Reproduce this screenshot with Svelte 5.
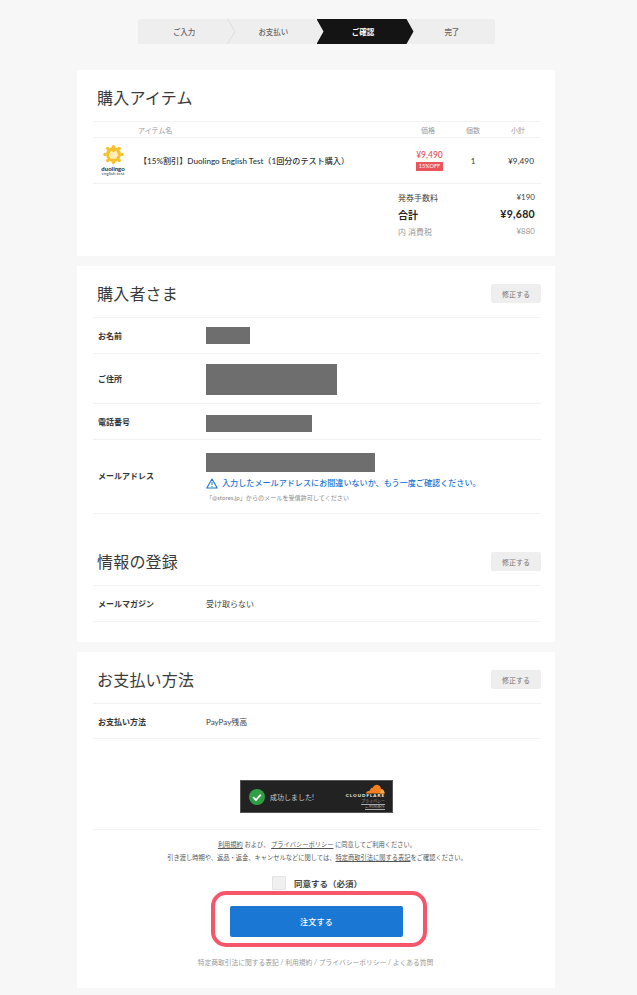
<script>
  const steps = [
    { label: 'ご入力' },
    { label: 'お支払い' },
    { label: 'ご確認', active: true },
    { label: '完了' }
  ];
  const buyer = [
    { label: 'お名前', w: 44, h: 17, cls: 'r1' },
    { label: 'ご住所', w: 131, h: 31, cls: 'r2' },
    { label: '電話番号', w: 106, h: 17, cls: 'r3' }
  ];
</script>

<div class="page">
  <ol class="stepper">
    {#each steps as s, i}
      <li class="step" class:active={s.active}>
        <span>{s.label}</span>
        {#if i === 0}
          <svg class="chev" width="9" height="25" viewBox="0 0 9 25"><path d="M0.5 0 L8 12.5 L0.5 25" fill="none" stroke="#dedede" stroke-width="1" /></svg>
        {/if}
      </li>
    {/each}
  </ol>

  <section class="card c1">
    <h2 class="title t1">購入アイテム</h2>
    <div class="thead">
      <span class="th-name">アイテム名</span>
      <span class="th-price">価格</span>
      <span class="th-qty">個数</span>
      <span class="th-sub">小計</span>
    </div>
    <div class="item">
      <div class="logo">
        <svg width="21" height="19" viewBox="0 0 22 20">
          <circle cx="11" cy="10" r="7.8" fill="#f6c02c" />
          <g fill="#f6c02c">
            <circle cx="11" cy="1.8" r="1.8" /><circle cx="17" cy="3.6" r="1.8" /><circle cx="20" cy="10" r="1.8" />
            <circle cx="17" cy="16.4" r="1.8" /><circle cx="11" cy="18.2" r="1.8" /><circle cx="5" cy="16.4" r="1.8" />
            <circle cx="2" cy="10" r="1.8" /><circle cx="5" cy="3.6" r="1.8" />
          </g>
          <path d="M6 10.5 L8.5 6 L11 7.5 L14 5.5 L16 10.5 L13.5 14.5 L8 14.5 Z" fill="#fdeeb8" />
        </svg>
        <span class="duo">duolingo</span>
        <span class="duo2">english test</span>
      </div>
      <div class="iname">【15%割引】Duolingo English Test（1回分のテスト購入）</div>
      <div class="iprice">
        <span class="red">¥9,490</span>
        <span class="off">15%OFF</span>
      </div>
      <div class="iqty">1</div>
      <div class="isub">¥9,490</div>
    </div>
    <div class="summary">
      <div class="sum-row fee"><span>発券手数料</span><span>¥190</span></div>
      <div class="sum-row total"><span>合計</span><span>¥9,680</span></div>
      <div class="sum-row tax"><span>内 消費税</span><span>¥880</span></div>
    </div>
  </section>

  <section class="card c2">
    <div class="head">
      <h2 class="title">購入者さま</h2>
      <button class="edit">修正する</button>
    </div>
    {#each buyer as b}
      <div class="row {b.cls}">
        <div class="label">{b.label}</div>
        <div class="mask" style="width:{b.w}px;height:{b.h}px"></div>
      </div>
    {/each}
    <div class="row r4">
      <div class="label">メールアドレス</div>
      <div class="mailbox">
        <div class="mask" style="width:169px;height:19px"></div>
        <p class="warn">
          <svg width="12" height="11" viewBox="0 0 12 11"><path d="M6 1 L11.2 10 L0.8 10 Z" fill="none" stroke="#1a78d4" stroke-width="1.1" stroke-linejoin="round" /><path d="M6 4 V7 M6 8 V9" stroke="#1a78d4" stroke-width="1" /></svg>
          <span>入力したメールアドレスにお間違いないか、もう一度ご確認ください。</span>
        </p>
        <p class="note">「@stores.jp」からのメールを受信許可してください</p>
      </div>
    </div>

    <div class="head h2">
      <h2 class="title">情報の登録</h2>
      <button class="edit">修正する</button>
    </div>
    <div class="row r5">
      <div class="label">メールマガジン</div>
      <div class="val">受け取らない</div>
    </div>
  </section>

  <section class="card c3">
    <div class="head">
      <h2 class="title">お支払い方法</h2>
      <button class="edit">修正する</button>
    </div>
    <div class="row r6">
      <div class="label">お支払い方法</div>
      <div class="val">PayPay残高</div>
    </div>

    <div class="turnstile">
      <svg class="ok" width="16" height="16" viewBox="0 0 16 16"><circle cx="8" cy="8" r="8" fill="#2f9e44" /><path d="M4.2 8.2 L7 11 L11.8 5.6" fill="none" stroke="#fff" stroke-width="1.8" /></svg>
      <span class="ok-text">成功しました!</span>
      <div class="cf">
        <svg width="20" height="10" viewBox="0 0 20 10"><path d="M1 9.5 C1 7.5 3 7 4.5 7 C5 4.5 7 3.5 8 3.5 C9 1 12 0 14 1.5 C15.5 2.5 16 4 16 5 C18 5 19.5 7 19.5 9.5 Z" fill="#f38020" /><path d="M15 9.5 C15.5 7 16 6 17 5.4 C18.7 5.8 19.5 7.5 19.5 9.5 Z" fill="#f9ab41" /></svg>
        <span class="cf-name">CLOUDFLARE</span>
        <span class="cf-link">プライバシー</span>
        <span class="cf-link">ご利用条件</span>
      </div>
    </div>

    <div class="terms">
      <p><u>利用規約</u> および、 <u>プライバシーポリシー</u> に同意してご利用ください。</p>
      <p>引き渡し時期や、返品・返金、キャンセルなどに関しては、<u>特定商取引法に関する表記</u>をご確認ください。</p>
    </div>

    <label class="agree"><span class="box"></span><span>同意する（必須）</span></label>

    <div class="ring"><button class="order">注文する</button></div>

    <p class="foot">特定商取引法に関する表記 / 利用規約 / プライバシーポリシー / よくある質問</p>
  </section>
</div>

<style>
  :global(body) {
    margin: 0;
    background: #f7f7f7;
  }
  .page {
    height: 995px;
    overflow: hidden;
    font-family: Lato, "Noto Sans CJK JP", sans-serif;
    color: #333;
    padding-top: 19px;
    box-sizing: border-box;
  }
  p, h2, ol { margin: 0; padding: 0; }
  .stepper {
    list-style: none;
    display: flex;
    width: 357px;
    height: 25px;
    margin: 0 0 26px 138px;
    background: #eeeeee;
    border-radius: 2px;
  }
  .step {
    flex: 0 0 89.25px;
    position: relative;
    display: flex;
    align-items: center;
    justify-content: center;
    box-sizing: border-box;
    padding-left: 3px;
    font-size: 7.5px;
    color: #666;
    font-weight: 500;
  }
  .step.active {
    background: #141414;
    color: #fff;
    font-weight: 700;
    flex: 0 0 97px;
    padding: 0 4px 0 0;
    margin-right: -7.75px;
    clip-path: polygon(0 0, 90px 0, 97px 50%, 90px 100%, 0 100%, 7px 50%);
    z-index: 1;
  }
  .chev { position: absolute; left: 88.5px; top: 0; }
  .card {
    width: 478px;
    margin: 0 0 10px 77px;
    background: #fff;
    box-sizing: border-box;
    padding: 0 14px 0 16px;
  }
  .c1 { height: 186px; }
  .c2 { height: 376px; }
  .c3 { height: 336px; }
  .title {
    font-size: 16px;
    font-weight: 400;
    color: #3a3a3a;
    line-height: 24px;
    letter-spacing: 0.2px;
  }
  .t1 { padding: 16px 0 11px 4px; }
  .thead {
    display: flex;
    align-items: center;
    height: 17px;
    border-top: 1px solid #f2f2f2;
    border-bottom: 1px solid #f2f2f2;
    font-size: 7px;
    color: #999;
    box-sizing: border-box;
  }
  .th-name { margin-left: 45px; width: 283px; }
  .th-price { width: 25px; }
  .th-qty { width: 45px; margin-left: 20px; }
  .item {
    display: flex;
    align-items: center;
    height: 46px;
    border-bottom: 1px solid #f2f2f2;
    box-sizing: border-box;
  }
  .logo {
    width: 26px;
    margin-left: 7px;
    display: flex;
    flex-direction: column;
    align-items: center;
    line-height: 1;
  }
  .duo { font-size: 6px; font-weight: 900; color: #2c3a55; margin-top: 2px; }
  .duo2 { font-size: 4.5px; color: #2c3a55; }
  .iname {
    width: 275px;
    margin-left: 13px;
    font-size: 8.1px;
    font-weight: 500;
    white-space: nowrap;
  }
  .iprice {
    width: 27px;
    display: flex;
    flex-direction: column;
    align-items: center;
    margin: 0 21px 0 2px;
  }
  .red { font-size: 8.5px; color: #e2525a; font-weight: 500; line-height: 11px; }
  .off {
    background: #e8555c;
    color: #fff;
    font-size: 5.5px;
    width: 27px;
    text-align: center;
    line-height: 9px;
    margin-top: 1px;
  }
  .iqty { width: 18px; font-size: 8px; text-align: center; }
  .isub { width: 52px; text-align: right; font-size: 8.3px; box-sizing: border-box; }
  .summary { margin: 6px 0 0 305px; padding-right: 6px; }
  .sum-row { display: flex; justify-content: space-between; align-items: center; }
  .fee { font-size: 8px; height: 14px; color: #444; }
  .total { font-size: 10px; font-weight: 700; height: 20px; color: #222; }
  .total span:last-child { font-size: 10.5px; letter-spacing: .3px; }
  .tax { font-size: 8px; height: 14px; color: #999; }
  .head {
    display: flex;
    justify-content: space-between;
    align-items: center;
    height: 52px;
    padding: 4px 0 0 4px;
    box-sizing: border-box;
    border-bottom: 1px solid #f2f2f2;
  }
  .h2 { margin-top: 22px; height: 50px; padding-top: 2px; }
  .edit {
    width: 50px;
    height: 19px;
    border: 0;
    border-radius: 2px;
    background: #eeeeee;
    color: #777;
    font: 400 7px Lato, "Noto Sans CJK JP", sans-serif;
    padding: 0;
  }
  .row {
    display: flex;
    align-items: center;
    padding-left: 5px;
    border-bottom: 1px solid #f2f2f2;
    box-sizing: border-box;
  }
  .r1 { height: 36px; }
  .r2 { height: 50px; }
  .r2 .mask { margin-top: 1px; }
  .r3 { height: 36px; }
  .r3 .mask { margin-top: 3px; }
  .r4 { height: 74px; align-items: flex-start; padding-top: 13px; }
  .r4 .label { padding-top: 17px; }
  .r5 { height: 36px; padding-bottom: 1px; }
  .r6 { height: 35px; }
  .label { width: 108px; flex: none; font-size: 8px; font-weight: 700; color: #333; }
  .val { font-size: 8px; color: #444; }
  .mask { background: #6e6e6e; }
  .warn {
    display: flex;
    align-items: center;
    gap: 4px;
    margin-top: 5px;
    font-size: 8.1px;
    font-weight: 500;
    color: #1a78d4;
    line-height: 12px;
    white-space: nowrap;
  }
  .note { font-size: 6.1px; color: #888; margin-top: 4px; line-height: 9px; }
  .turnstile {
    width: 153px;
    height: 33px;
    margin: 41px 0 0 147px;
    background: #222;
    border: 1px solid #555;
    box-sizing: border-box;
    display: flex;
    align-items: center;
    padding: 0 7px 0 8px;
  }
  .ok-text { font-size: 7px; color: #ccc; margin-left: 5px; }
  .cf {
    margin-left: auto;
    display: flex;
    flex-direction: column;
    align-items: flex-end;
    line-height: 1;
  }
  .cf-name { font-size: 4.5px; font-weight: 900; letter-spacing: 1px; color: #eee; }
  .cf-link { font-size: 4px; color: #aaa; text-decoration: underline; margin-top: 1px; }
  .terms {
    margin-top: 16px;
    border-top: 1px solid #f2f2f2;
    padding-top: 8px;
    font-size: 6.25px;
    color: #555;
    text-align: center;
    line-height: 13px;
  }
  .agree {
    display: flex;
    align-items: center;
    justify-content: center;
    gap: 8px;
    margin-top: 12px;
    font-size: 8.5px;
    font-weight: 700;
    color: #444;
    padding-right: 0;
    height: 14px;
  }
  .box {
    width: 14px;
    height: 14px;
    background: #f0f0f0;
    border: 1px solid #e4e4e4;
    box-sizing: border-box;
    border-radius: 1px;
  }
  .ring {
    width: 216px;
    height: 56px;
    margin: 1px 0 0 118px;
    border: 4px solid #f5566a;
    border-radius: 15px;
    box-sizing: border-box;
    display: flex;
    align-items: center;
    padding: 5px 0 0 15px;
  }
  .order {
    width: 173px;
    height: 31px;
    border: 0;
    border-radius: 2px;
    background: #1a78d4;
    color: #fff;
    font: 500 8px Lato, "Noto Sans CJK JP", sans-serif;
    letter-spacing: .3px;
    padding: 0;
  }
  .foot {
    text-align: center;
    font-size: 6.75px;
    color: #999;
    margin-top: 10px;
    line-height: 10px;
    padding-right: 3px;
  }
</style>
